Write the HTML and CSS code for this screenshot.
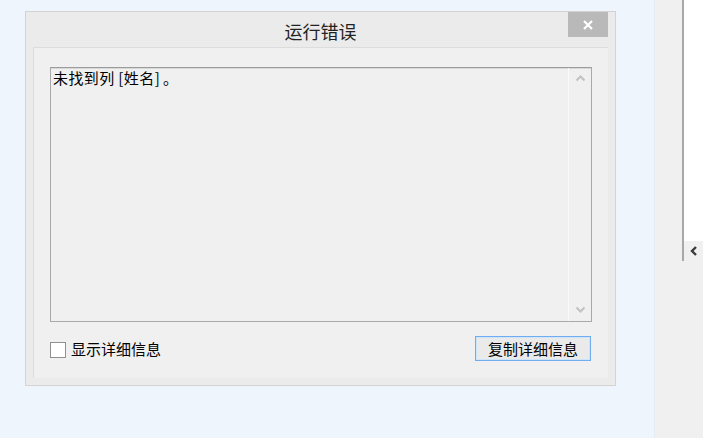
FILE: index.html
```html
<!DOCTYPE html>
<html lang="zh-CN">
<head>
<meta charset="utf-8">
<title>运行错误</title>
<link rel="stylesheet" href="styles.css">
</head>
<body>
<div class="main">
  <div class="dialog">
    <div class="titlebar">
      <span class="title">运行错误</span>
      <div class="close">
        <svg width="12" height="12" viewBox="0 0 12 12"><path d="M2 2 L10 10 M10 2 L2 10" stroke="#fff" stroke-width="2.2" fill="none"/></svg>
      </div>
    </div>
    <div class="panel">
      <div class="textbox">
        <div class="content">未找到列 [姓名]<span class="stop">。</span></div>
        <div class="scrollbar">
          <svg class="arrow" width="11" height="8" viewBox="0 0 11 8"><path d="M1.5 6.5 L5.5 2.5 L9.5 6.5" stroke="#c2c2c2" stroke-width="2" fill="none"/></svg>
          <svg class="arrow" width="11" height="8" viewBox="0 0 11 8"><path d="M1.5 1.5 L5.5 5.5 L9.5 1.5" stroke="#c2c2c2" stroke-width="2" fill="none"/></svg>
        </div>
      </div>
      <div class="footer">
        <label class="check"><span class="box"></span><span>显示详细信息</span></label>
        <button class="btn">复制详细信息</button>
      </div>
    </div>
  </div>
</div>
<div class="side">
  <div class="sidepane">
    <div class="white"></div>
    <div class="toggle">
      <svg width="10" height="12" viewBox="0 0 10 12"><path d="M7 2 L3 6 L7 10" stroke="#3a3a3a" stroke-width="2.4" fill="none"/></svg>
    </div>
  </div>
</div>
</body>
</html>
```

FILE: styles.css
```css
html, body {
  margin: 0;
  padding: 0;
}
body {
  width: 703px;
  height: 438px;
  display: flex;
  background: #eef5fd;
  font-family: "Noto Sans CJK SC", "Noto Sans", sans-serif;
  color: #1a1a1a;
  overflow: hidden;
}
.main {
  flex: 0 0 655px;
  padding: 11px 0 0 25px;
  box-sizing: border-box;
  border-right: 1px solid #e6ecf4;
}
.dialog {
  width: 591px;
  height: 375px;
  box-sizing: border-box;
  border: 1px solid #d3d3d3;
  background: #ebebeb;
  padding: 0 7px 7px 7px;
  display: flex;
  flex-direction: column;
}
.titlebar {
  position: relative;
  height: 35px;
  display: flex;
  align-items: center;
  justify-content: center;
  flex: 0 0 35px;
}
.title {
  font-size: 18px;
  color: #222;
  margin-top: 2px;
}
.close {
  position: absolute;
  right: 0;
  top: 0;
  width: 40px;
  height: 25px;
  background: #b9b9b9;
  display: flex;
  align-items: center;
  justify-content: center;
}
.panel {
  flex: 1;
  background: #f0f0f0;
  border-top: 1px solid #dcdcdc;
  border-left: 1px solid #dcdcdc;
  padding: 19px 16px 0 16px;
  display: flex;
  flex-direction: column;
}
.textbox {
  height: 255px;
  box-sizing: border-box;
  border: 1px solid #a9a9a9;
  border-top-color: #9c9c9c;
  box-shadow: inset 0 1px 0 #d8d8d8;
  display: flex;
  background: #f0f0f0;
}
.content {
  flex: 1;
  font-size: 15px;
  line-height: 18px;
  padding: 1px 0 0 2px;
  color: #000;
  letter-spacing: 0.4px;
}
.stop {
  margin-left: 3px;
}
.scrollbar {
  width: 22px;
  border-left: 1px solid #fafafa;
  display: flex;
  flex-direction: column;
  justify-content: space-between;
  align-items: center;
  padding: 6px 0 7px 0;
}
.footer {
  display: flex;
  justify-content: space-between;
  align-items: center;
  margin-top: 14px;
  padding-right: 1px;
}
.check {
  display: flex;
  align-items: center;
  gap: 5px;
  font-size: 15px;
  color: #000;
}
.box {
  width: 16px;
  height: 16px;
  box-sizing: border-box;
  border: 1px solid #8f8f8f;
  background: #fff;
  margin-top: 2px;
}
.btn {
  width: 116px;
  height: 25px;
  box-sizing: border-box;
  border: 1px solid #6fadf0;
  background: #eaeaea;
  font-family: "Noto Sans CJK SC", "Noto Sans", sans-serif;
  font-size: 15px;
  color: #000;
  padding: 0;
  line-height: 22px;
  box-shadow: inset 0 0 0 1px #cde4fb;
}
.side {
  flex: 1;
  background: #f0f0f0;
  display: flex;
  justify-content: flex-end;
}
.sidepane {
  width: 19px;
  border-left: 2px solid #a8a8a8;
  height: 261px;
  display: flex;
  flex-direction: column;
}
.white {
  height: 241px;
  background: #fff;
}
.toggle {
  flex: 1;
  background: #f0f0f0;
  display: flex;
  align-items: center;
  justify-content: center;
}
```
